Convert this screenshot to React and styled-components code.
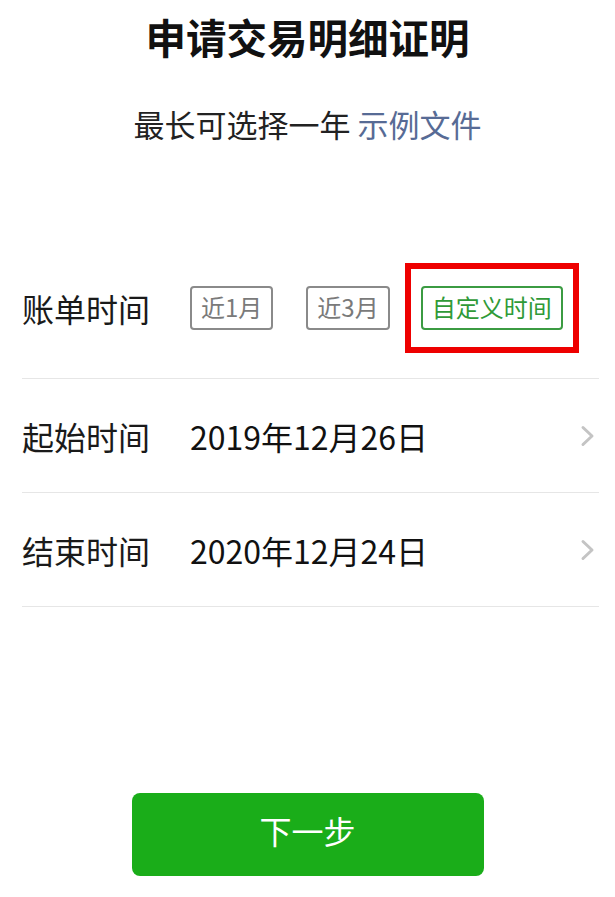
import React from 'react'
import styled, { createGlobalStyle } from 'styled-components'

const GlobalStyle = createGlobalStyle`
  body {
    margin: 0;
    background: #ffffff;
    font-family: 'Noto Sans CJK SC', 'Noto Sans', sans-serif;
    color: #111111;
  }
`

const Chevron = () => (
  <svg width='16' height='22' viewBox='0 0 16 22'>
    <path d='M3 2.5 L12 11 L3 19.5' fill='none' stroke='#c4c4c4' strokeWidth='3' strokeLinecap='round' strokeLinejoin='round' />
  </svg>
)

const App = () => (
  <Page>
    <GlobalStyle />
    <Title>申请交易明细证明</Title>
    <Subtitle>
      最长可选择一年 <Link>示例文件</Link>
    </Subtitle>
    <List>
      <Row $first>
        <Label>账单时间</Label>
        <Options>
          <Chip>近1月</Chip>
          <Chip>近3月</Chip>
          <Highlight>
            <Chip $active>自定义时间</Chip>
          </Highlight>
        </Options>
      </Row>
      <Row>
        <Label>起始时间</Label>
        <Value>2019年12月26日</Value>
        <Chevron />
      </Row>
      <Row>
        <Label>结束时间</Label>
        <Value>2020年12月24日</Value>
        <Chevron />
      </Row>
    </List>
    <Footer>
      <NextButton>下一步</NextButton>
    </Footer>
  </Page>
)

const Page = styled.div`
  width: 615px;
  min-height: 897px;
  box-sizing: border-box;
  padding-top: 17px;
`

const Title = styled.h1`
  margin: 0;
  text-align: center;
  font-size: 40.5px;
  line-height: 40px;
  font-weight: 700;
  color: #111111;
`

const Subtitle = styled.div`
  margin-top: 47px;
  text-align: center;
  font-size: 31px;
  line-height: 40px;
  color: #222222;
`

const Link = styled.span`
  color: #576b95;
`

const List = styled.div`
  margin: 119px 16px 0 22px;
`

const Row = styled.div`
  display: flex;
  align-items: center;
  border-bottom: 1px solid #e6e6e6;
  height: ${(p) => (p.$first ? 'auto' : '114px')};
  padding-bottom: ${(p) => (p.$first ? '25px' : '0')};
  padding-right: 3px;
  box-sizing: border-box;
`

const Label = styled.span`
  width: 168px;
  flex-shrink: 0;
  font-size: 32px;
  line-height: 40px;
  color: #1a1a1a;
`

const Value = styled.span`
  flex: 1;
  font-size: 32px;
  line-height: 40px;
  color: #111111;
`

const Options = styled.div`
  display: flex;
  align-items: center;
  gap: 33px;

  > :last-child {
    margin-left: -18px;
  }
`

const Chip = styled.span`
  display: inline-flex;
  align-items: center;
  justify-content: center;
  height: 44px;
  padding: 0 9px 4px;
  box-sizing: border-box;
  border: 2px solid ${(p) => (p.$active ? '#3b9b42' : '#8a8a8a')};
  border-radius: 4px;
  font-size: 24px;
  color: ${(p) => (p.$active ? '#2f9a37' : '#7a7a7a')};
`

const Highlight = styled.span`
  display: inline-flex;
  padding: 17px 10px;
  border: 6px solid #ee0000;
`

const Footer = styled.div`
  display: flex;
  justify-content: center;
  margin-top: 186px;
`

const NextButton = styled.button`
  width: 352px;
  height: 83px;
  padding: 0 0 10px;
  border: none;
  border-radius: 8px;
  background: #1aad19;
  color: #ffffff;
  font-family: inherit;
  font-size: 32px;
`

export default App
